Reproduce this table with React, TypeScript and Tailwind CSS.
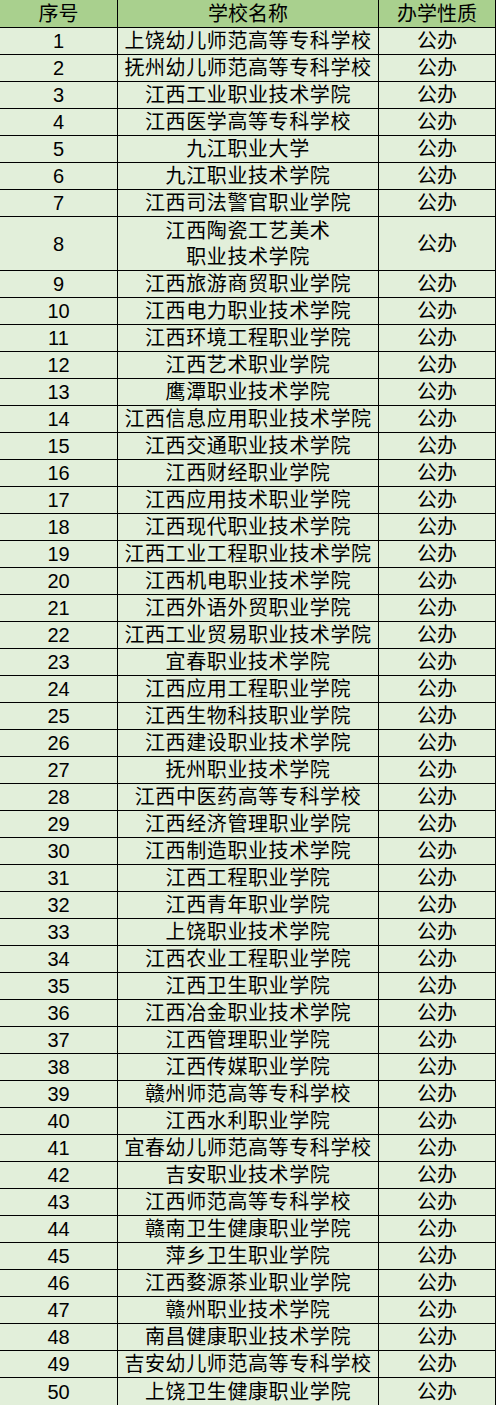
import React from "react";

const schools = [
  "上饶幼儿师范高等专科学校",
  "抚州幼儿师范高等专科学校",
  "江西工业职业技术学院",
  "江西医学高等专科学校",
  "九江职业大学",
  "九江职业技术学院",
  "江西司法警官职业学院",
  "江西陶瓷工艺美术职业技术学院",
  "江西旅游商贸职业学院",
  "江西电力职业技术学院",
  "江西环境工程职业学院",
  "江西艺术职业学院",
  "鹰潭职业技术学院",
  "江西信息应用职业技术学院",
  "江西交通职业技术学院",
  "江西财经职业学院",
  "江西应用技术职业学院",
  "江西现代职业技术学院",
  "江西工业工程职业技术学院",
  "江西机电职业技术学院",
  "江西外语外贸职业学院",
  "江西工业贸易职业技术学院",
  "宜春职业技术学院",
  "江西应用工程职业学院",
  "江西生物科技职业学院",
  "江西建设职业技术学院",
  "抚州职业技术学院",
  "江西中医药高等专科学校",
  "江西经济管理职业学院",
  "江西制造职业技术学院",
  "江西工程职业学院",
  "江西青年职业学院",
  "上饶职业技术学院",
  "江西农业工程职业学院",
  "江西卫生职业学院",
  "江西冶金职业技术学院",
  "江西管理职业学院",
  "江西传媒职业学院",
  "赣州师范高等专科学校",
  "江西水利职业学院",
  "宜春幼儿师范高等专科学校",
  "吉安职业技术学院",
  "江西师范高等专科学校",
  "赣南卫生健康职业学院",
  "萍乡卫生职业学院",
  "江西婺源茶业职业学院",
  "赣州职业技术学院",
  "南昌健康职业技术学院",
  "吉安幼儿师范高等专科学校",
  "上饶卫生健康职业学院",
];

const App = () => {
  return (
    <div
      className="w-[496px] bg-white text-black text-[20px] leading-[26px]"
      style={{ fontFamily: '"Liberation Sans", "Noto Sans CJK SC", sans-serif' }}
    >
      {/* Header */}
      <div className="grid grid-cols-[118px_261px_117px] h-[28px] bg-[#a9d08e]">
        <div className="flex items-center justify-center border-r border-b border-black">序号</div>
        <div className="flex items-center justify-center border-r border-b border-black">学校名称</div>
        <div className="flex items-center justify-center border-r border-b border-black">办学性质</div>
      </div>

      {schools.map((name, i) => {
        const last = i === schools.length - 1;
        const tall = i === 7;
        const rowH = tall ? "h-[54px]" : "h-[27px]";
        const bb = last ? "" : "border-b";
        return (
          <div key={i} className={`grid grid-cols-[118px_261px_117px] bg-[#e2efda] ${rowH}`}>
            <div className={`flex items-center justify-center border-r border-black ${bb}`}>{i + 1}</div>
            <div className={`flex items-center justify-center text-center border-r border-black ${bb} tracking-[0.6px]`}>
              {tall ? (
                <span>
                  江西陶瓷工艺美术
                  <br />
                  职业技术学院
                </span>
              ) : (
                name
              )}
            </div>
            <div className={`flex items-center justify-center border-r border-black ${bb}`}>公办</div>
          </div>
        );
      })}
    </div>
  );
};

export default App;
